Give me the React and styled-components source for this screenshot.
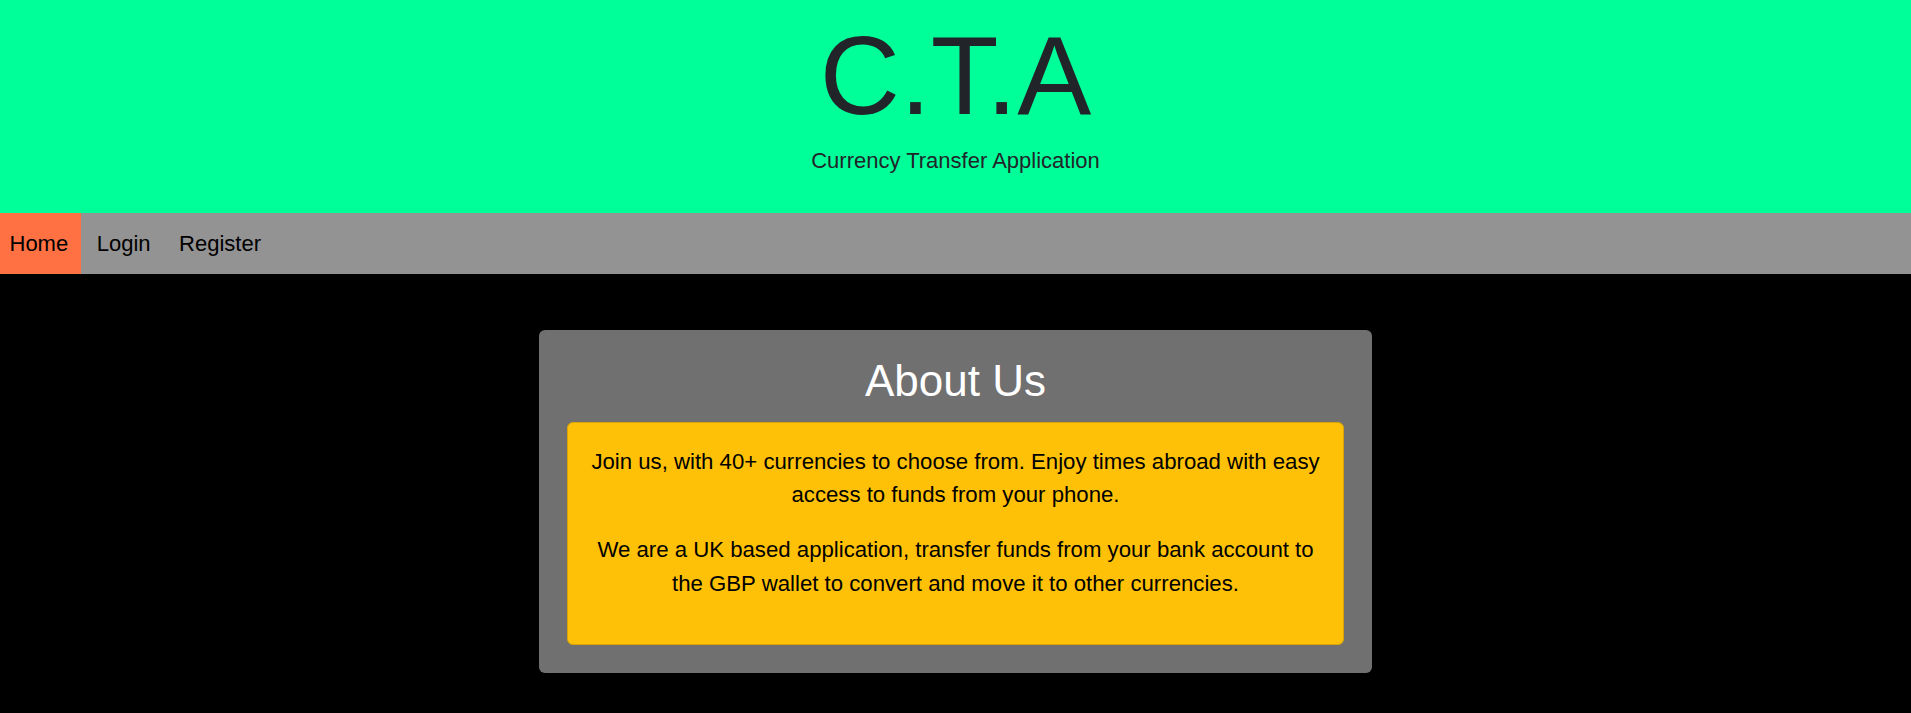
import React from "react";
import styled, { createGlobalStyle } from "styled-components";

const Global = createGlobalStyle`
  html, body { margin: 0; padding: 0; background: #000; }
  body { font-family: "Liberation Sans", Arial, sans-serif; color: #212529; }
  * { box-sizing: border-box; }
`;

const Header = styled.header`
  background: #00ff99;
  height: 213px;
  display: flex;
  flex-direction: column;
  align-items: center;
  padding-top: 13px;
`;

const Title = styled.h1`
  margin: 0;
  font-size: 111px;
  font-weight: 400;
  line-height: 1.15;
  color: #212529;
`;

const Subtitle = styled.p`
  margin: 3px 0 0;
  font-size: 22px;
  line-height: 1.5;
  color: #212529;
`;

const Nav = styled.nav`
  background: #939393;
  height: 61px;
  display: flex;
  align-items: stretch;
  gap: 6px;
`;

const NavItem = styled.a`
  display: flex;
  align-items: center;
  padding: 0 13px 0 9.5px;
  font-size: 22px;
  color: #000;
  text-decoration: none;
  background: ${(p) => (p.$active ? "#ff7043" : "transparent")};
`;

const Main = styled.main`
  background: #000;
  display: flex;
  justify-content: center;
  padding: 56px 0 40px;
`;

const Card = styled.section`
  width: 833px;
  background: #707070;
  border-radius: 6px;
  padding: 25px 28px 28px;
  display: flex;
  flex-direction: column;
  align-items: stretch;
`;

const CardTitle = styled.h2`
  margin: 0 0 14px;
  font-size: 44px;
  font-weight: 400;
  line-height: 1.2;
  text-align: center;
  color: #fff;
`;

const InfoBox = styled.div`
  background: #ffc107;
  border: 1px solid #d9a406;
  border-radius: 6px;
  padding: 22px 16px 22px;
`;

const Para = styled.p`
  margin: 0 0 22px;
  font-size: 22.2px;
  line-height: 33.3px;
  text-align: center;
  color: #000;
`;

export default function App() {
  return (
    <>
      <Global />
      <Header>
        <Title>C.T.A</Title>
        <Subtitle>Currency Transfer Application</Subtitle>
      </Header>
      <Nav>
        <NavItem $active href="#">Home</NavItem>
        <NavItem href="#">Login</NavItem>
        <NavItem href="#">Register</NavItem>
      </Nav>
      <Main>
        <Card>
          <CardTitle>About Us</CardTitle>
          <InfoBox>
            <Para>
              Join us, with 40+ currencies to choose from. Enjoy times abroad with easy access to funds from your phone.
            </Para>
            <Para>
              We are a UK based application, transfer funds from your bank account to the GBP wallet to convert and move it to other currencies.
            </Para>
          </InfoBox>
        </Card>
      </Main>
    </>
  );
}
